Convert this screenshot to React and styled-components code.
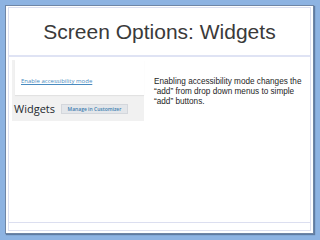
import React from "react";
import styled, { createGlobalStyle } from "styled-components";

const Global = createGlobalStyle`
  html, body {
    margin: 0;
    padding: 0;
    background: #8db3e2;
  }
  #root {
    width: 320px;
    height: 240px;
  }
`;

const Stage = styled.div`
  width: 320px;
  height: 240px;
  padding: 5px 6px 6px 5px;
  box-sizing: border-box;
  background: #8db3e2;
`;

const Slide = styled.div`
  height: 100%;
  background: #fff;
  border: 1px solid #6f86a6;
  box-shadow: 1px 1px 1px rgba(50, 70, 100, 0.5);
  padding: 1px 2px 2px 2px;
  box-sizing: border-box;
`;

const Frame = styled.div`
  height: 100%;
  border: 1px solid #dcdff0;
  box-sizing: border-box;
  display: flex;
  flex-direction: column;
`;

const Header = styled.div`
  height: 49px;
  border-bottom: 2px solid #dfe3f4;
  display: flex;
  align-items: center;
  justify-content: center;
  font-family: "Liberation Sans", Arial, sans-serif;
  font-size: 21px;
  color: #3a3a3a;
  padding-top: 1px;
  box-sizing: border-box;
`;

const Body = styled.div`
  flex: 1;
  display: flex;
  align-items: flex-start;
  gap: 10px;
  padding: 3px 0 0 3px;
`;

const Footer = styled.div`
  height: 7px;
  border-top: 1px solid #dcdff0;
`;

const Shot = styled.div`
  width: 132px;
  background: #f1f1f1;
  display: flex;
  flex-direction: column;
  padding-left: 3px;
  box-sizing: border-box;
`;

const OptionsBox = styled.div`
  height: 35px;
  background: #fff;
  display: flex;
  align-items: flex-end;
  padding: 0 0 10px 6px;
  box-sizing: border-box;
  box-shadow: 0 1px 1px rgba(0, 0, 0, 0.06);
`;

const A11yLink = styled.a`
  font-family: "Open Sans", sans-serif;
  font-size: 6px;
  color: #4a8bc0;
  text-decoration: underline;
`;

const TitleRow = styled.div`
  height: 26px;
  display: flex;
  align-items: center;
  gap: 6px;
`;

const PageTitle = styled.span`
  font-family: "Open Sans", sans-serif;
  font-size: 11px;
  color: #23282d;
  margin-left: -1px;
`;

const ManageButton = styled.span`
  height: 10px;
  width: 67px;
  display: flex;
  align-items: center;
  justify-content: center;
  background: #e3e6ea;
  border: 1px solid #d4d7dc;
  box-sizing: border-box;
  font-family: "Open Sans", sans-serif;
  font-size: 5px;
  font-weight: 600;
  color: #3f7fb0;
  margin-top: 2px;
`;

const Note = styled.p`
  margin: 17px 0 0 0;
  width: 152px;
  font-family: "Liberation Sans", Arial, sans-serif;
  font-size: 8.2px;
  line-height: 10px;
  color: #1e1e1e;
`;

export default function App() {
  return (
    <>
      <Global />
      <Stage>
        <Slide>
          <Frame>
            <Header>Screen Options: Widgets</Header>
            <Body>
              <Shot>
                <OptionsBox>
                  <A11yLink>Enable accessibility mode</A11yLink>
                </OptionsBox>
                <TitleRow>
                  <PageTitle>Widgets</PageTitle>
                  <ManageButton>Manage in Customizer</ManageButton>
                </TitleRow>
              </Shot>
              <Note>
                Enabling accessibility mode changes the “add” from drop down
                menus to simple “add” buttons.
              </Note>
            </Body>
            <Footer />
          </Frame>
        </Slide>
      </Stage>
    </>
  );
}
